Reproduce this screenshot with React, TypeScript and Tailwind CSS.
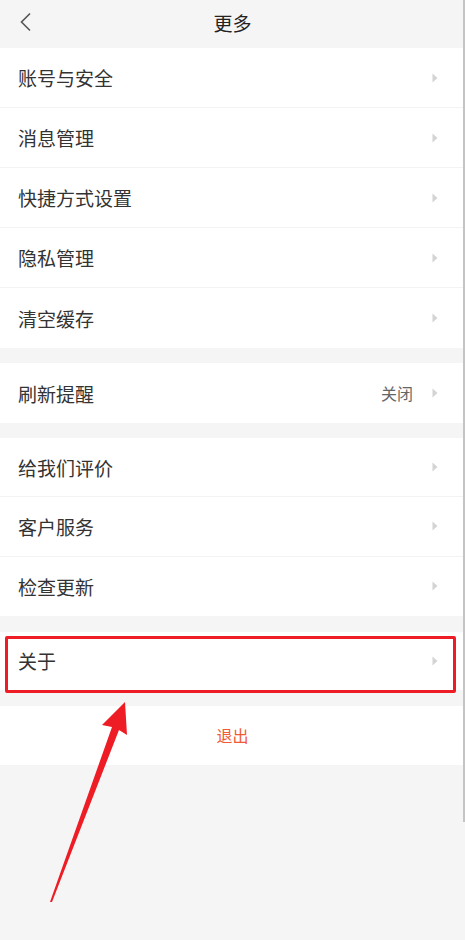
import React from 'react';

type Item = {
  label: string;
  value?: string;
};

const groups: Item[][] = [
  [
    { label: '账号与安全' },
    { label: '消息管理' },
    { label: '快捷方式设置' },
    { label: '隐私管理' },
    { label: '清空缓存' },
  ],
  [{ label: '刷新提醒', value: '关闭' }],
  [{ label: '给我们评价' }, { label: '客户服务' }, { label: '检查更新' }],
];

const Caret = () => (
  <svg width="6" height="10" viewBox="0 0 6 10" className="shrink-0">
    <path d="M0.5 0.5 L5.5 5 L0.5 9.5 Z" fill="#d4d4d4" />
  </svg>
);

const Row = ({ label, value, last, h = 'h-[60px]' }: Item & { last?: boolean; h?: string }) => (
  <div
    className={`${h} flex items-center bg-white pl-[18px] pr-[27px] ${
      last ? '' : 'border-b border-[#f3f3f3]'
    }`}
  >
    <span className="flex-1 text-[19px] text-[#333] leading-none">{label}</span>
    {value && <span className="text-[16px] text-[#666] mr-[19px] leading-none">{value}</span>}
    <Caret />
  </div>
);

export default function App() {
  return (
    <div
      className="relative w-[465px] h-[940px] bg-[#f5f5f5] overflow-hidden"
      style={{ fontFamily: '"Noto Sans CJK SC", "Noto Sans", sans-serif' }}
    >
      <header className="h-[48px] flex items-center justify-center relative pb-[4px]">
        <svg
          width="14"
          height="20"
          viewBox="0 0 14 20"
          className="absolute left-[19px] top-[12px]"
        >
          <path d="M11 1.5 L2.5 10 L11 18.5" fill="none" stroke="#555" strokeWidth="1.6" />
        </svg>
        <h1 className="text-[19px] text-[#222] leading-none">更多</h1>
      </header>

      <div className="flex flex-col">
        <div className="flex flex-col">
          {groups[0].map((it, j) => (
            <Row key={it.label} {...it} last={j === 4} />
          ))}
        </div>
        <div className="flex flex-col mt-[15px]">
          <Row {...groups[1][0]} last />
        </div>
        <div className="flex flex-col mt-[15px]">
          {groups[2].map((it, j) => (
            <Row key={it.label} {...it} h="h-[59.33px]" last={j === 2} />
          ))}
        </div>
        <div className="mt-[16px]">
          <Row label="关于" h="h-[58px]" last />
        </div>
        <div className="mt-[16px] h-[59px] bg-white flex items-center justify-center">
          <span className="text-[16px] text-[#f05a35] leading-none">退出</span>
        </div>
      </div>

      {/* annotation */}
      <div className="absolute left-[5px] top-[636px] w-[451px] h-[57px] border-[3px] border-[#ee1c25] rounded-[2px]" />
      <svg className="absolute left-0 top-0" width="465" height="940" viewBox="0 0 465 940">
        <polygon
          points="50,902 112,727 102,725 125,702 127,735 119,730 52,902"
          fill="#ee1c25"
        />
      </svg>
      <div className="absolute right-0 top-0 w-[2px] h-[822px] bg-[#c4c4c4]" />
    </div>
  );
}
